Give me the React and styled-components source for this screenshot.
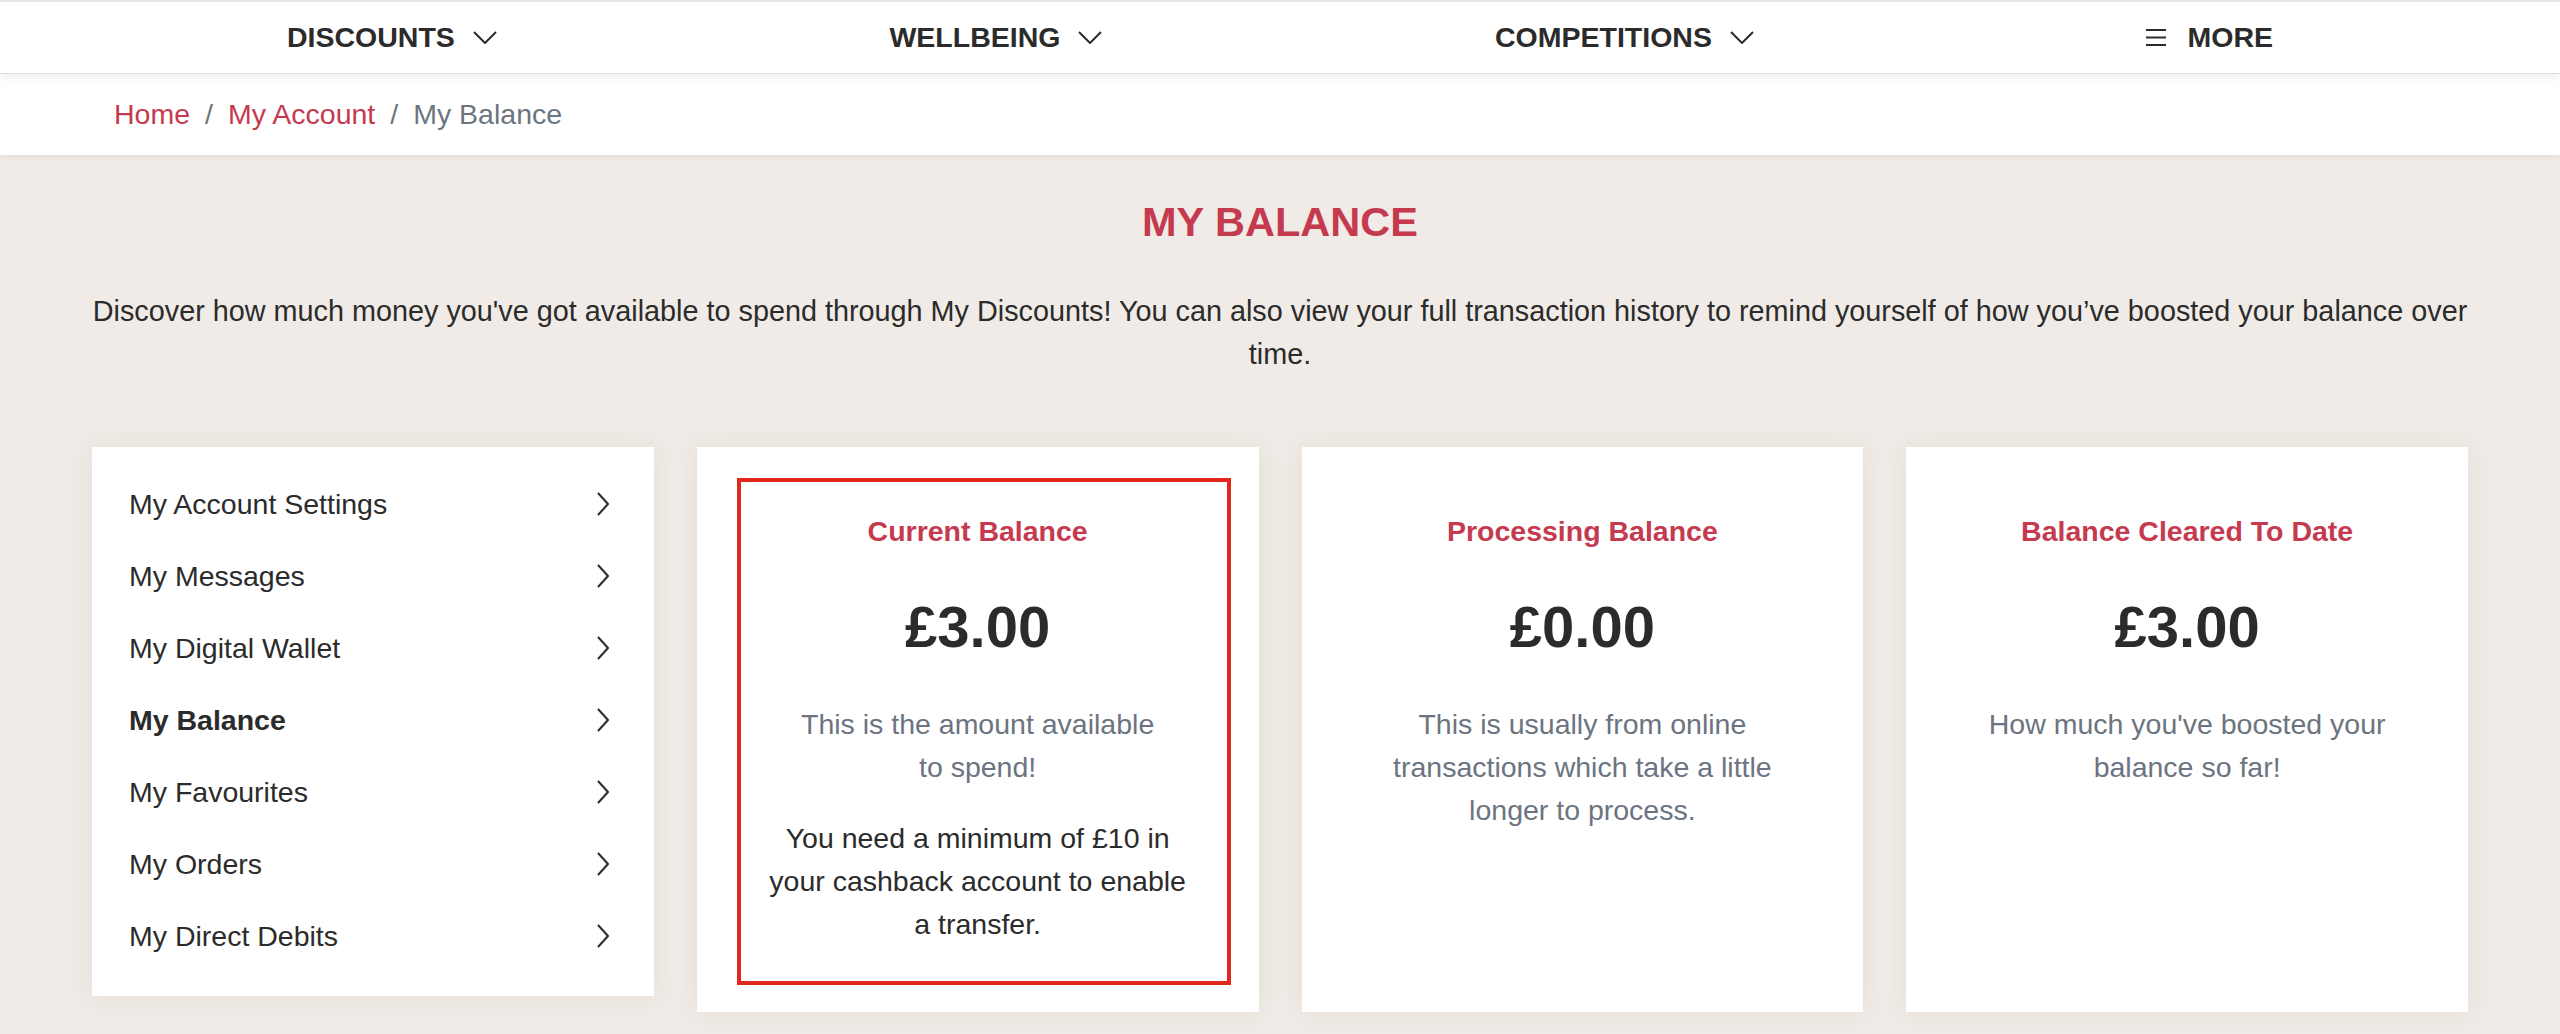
import React from "react";
import styled, { createGlobalStyle } from "styled-components";

const GlobalStyle = createGlobalStyle`
	* { box-sizing: border-box; }
	body {
		margin: 0;
		background: #f0ebe6;
		font-family: "Liberation Sans", Arial, Helvetica, sans-serif;
		color: #2b2b2b;
	}
`

const NavBar = styled.nav`
	background: #fff;
	border-top: 2px solid #e4e4e4;
	border-bottom: 1px solid #dedede;
	box-shadow: 0 3px 8px rgba(0, 0, 0, 0.07);
	height: 74px;
	position: relative;
	z-index: 2;
`

const NavInner = styled.ul`
	list-style: none;
	margin: 0 auto;
	padding: 0;
	width: 1986px;
	height: 100%;
	display: flex;
	align-items: center;
	justify-content: space-between;
`

const NavItem = styled.li`
	display: flex;
	align-items: center;
	gap: ${p => (p.$iconFirst ? "21px" : "18px")};
	font-size: 28.5px;
	font-weight: 700;
	text-transform: uppercase;
	color: #2b2b2b;
`

const Crumbs = styled.div`
	background: #fff;
	height: 81px;
	box-shadow: 0 2px 5px rgba(0, 0, 0, 0.06);
	position: relative;
	z-index: 1;
`

const CrumbList = styled.ol`
	list-style: none;
	margin: 0 auto;
	padding: 0 0 0 22px;
	width: 2376px;
	height: 100%;
	display: flex;
	align-items: center;
	font-size: 28.5px;
`

const Crumb = styled.li`
	color: ${p => (p.$active ? "#6c757d" : "#c53a4f")};
`

const Slash = styled.li`
	color: #6c757d;
	margin: 0 15px;
`

const Main = styled.main`
	width: 2376px;
	margin: 0 auto;
	padding: 42px 0 60px;
`

const Title = styled.h1`
	margin: 0;
	text-align: center;
	color: #c53a4f;
	font-size: 41.5px;
	line-height: 49px;
	font-weight: 700;
	text-transform: uppercase;
`

const Intro = styled.p`
	margin: 44px 0 0;
	text-align: center;
	font-size: 28.8px;
	line-height: 43px;
	color: #2b2b2b;
`

const Grid = styled.div`
	margin-top: 71px;
	display: grid;
	grid-template-columns: repeat(4, 1fr);
	column-gap: 43px;
	align-items: stretch;
`

const SideMenu = styled.ul`
	list-style: none;
	margin: 0;
	padding: 21px 45px 24px 37px;
	background: #fff;
	align-self: start;
	box-shadow: 0 0 24px rgba(80, 60, 40, 0.07);
`

const MenuRow = styled.li`
	height: 72px;
	display: flex;
	align-items: center;
	justify-content: space-between;
	font-size: 28.5px;
	font-weight: ${p => (p.$active ? 700 : 400)};
	color: #2b2b2b;
`

const Card = styled.div`
	background: #fff;
	padding: 31px 40px 27px;
	display: flex;
	box-shadow: 0 0 24px rgba(80, 60, 40, 0.07);
`

// the highlighted panel reaches 12px further right, text stays centred on the card
const Panel = styled.div`
	flex: 1;
	border: 4px solid ${p => (p.$highlight ? "#e0281c" : "transparent")};
	margin-right: ${p => (p.$highlight ? "-12px" : "0")};
	padding: 28px ${p => (p.$highlight ? "40px" : "0")} 35px ${p => (p.$highlight ? "28px" : "0")};
	text-align: center;
`

const CardTitle = styled.h3`
	margin: 0 0 39px;
	color: #c53a4f;
	font-size: 28.5px;
	line-height: 43px;
	font-weight: 700;
`

const Amount = styled.div`
	font-size: 58px;
	line-height: 70px;
	font-weight: 700;
	color: #2b2b2b;
	margin-bottom: 41px;
`

const Desc = styled.p`
	margin: 0;
	padding: 0 30px;
	font-size: 28.5px;
	line-height: 43px;
	color: #6b7480;
`

const Note = styled.p`
	margin: 28px 0 0;
	font-size: 28.5px;
	line-height: 43px;
	color: #2b2b2b;
`

const Chevron = ({ dir }) =>
	dir === "down" ? (
		<svg width="24" height="13" viewBox="0 0 24 13" fill="none">
			<polyline points="1,1 12,12 23,1" stroke="#2b2b2b" strokeWidth="2" />
		</svg>
	) : (
		<svg width="12" height="24" viewBox="0 0 12 24" fill="none">
			<polyline points="1,1 11,12 1,23" stroke="#2b2b2b" strokeWidth="2" />
		</svg>
	)

const Burger = () => (
	<svg width="20" height="18" viewBox="0 0 20 18" fill="none">
		<line x1="0" y1="1" x2="20" y2="1" stroke="#2b2b2b" strokeWidth="2" />
		<line x1="0" y1="8.5" x2="20" y2="8.5" stroke="#2b2b2b" strokeWidth="2" />
		<line x1="0" y1="16" x2="20" y2="16" stroke="#2b2b2b" strokeWidth="2" />
	</svg>
)

const menu = [
	"My Account Settings",
	"My Messages",
	"My Digital Wallet",
	"My Balance",
	"My Favourites",
	"My Orders",
	"My Direct Debits",
]

const balances = [
	{
		title: "Current Balance",
		amount: "£3.00",
		desc: "This is the amount available to spend!",
		note: "You need a minimum of £10 in your cashback account to enable a transfer.",
		highlight: true,
	},
	{
		title: "Processing Balance",
		amount: "£0.00",
		desc: "This is usually from online transactions which take a little longer to process.",
	},
	{
		title: "Balance Cleared To Date",
		amount: "£3.00",
		desc: "How much you've boosted your balance so far!",
	},
]

const App = () => {
	return <div>
		<GlobalStyle />
		<NavBar>
			<NavInner>
				<NavItem>Discounts <Chevron dir="down" /></NavItem>
				<NavItem>Wellbeing <Chevron dir="down" /></NavItem>
				<NavItem>Competitions <Chevron dir="down" /></NavItem>
				<NavItem $iconFirst><Burger />More</NavItem>
			</NavInner>
		</NavBar>
		<Crumbs>
			<CrumbList>
				<Crumb>Home</Crumb>
				<Slash>/</Slash>
				<Crumb>My Account</Crumb>
				<Slash>/</Slash>
				<Crumb $active>My Balance</Crumb>
			</CrumbList>
		</Crumbs>
		<Main>
			<Title>My Balance</Title>
			<Intro>
				Discover how much money you've got available to spend through My Discounts! You can also view your full transaction history to remind yourself of how you’ve boosted your balance over time.
			</Intro>
			<Grid>
				<SideMenu>
					{menu.map(item => (
						<MenuRow key={item} $active={item === "My Balance"}>
							{item}
							<Chevron dir="right" />
						</MenuRow>
					))}
				</SideMenu>
				{balances.map(b => (
					<Card key={b.title}>
						<Panel $highlight={b.highlight}>
							<CardTitle>{b.title}</CardTitle>
							<Amount>{b.amount}</Amount>
							<Desc>{b.desc}</Desc>
							{b.note ? <Note>{b.note}</Note> : null}
						</Panel>
					</Card>
				))}
			</Grid>
		</Main>
	</div>
}

export default App;
